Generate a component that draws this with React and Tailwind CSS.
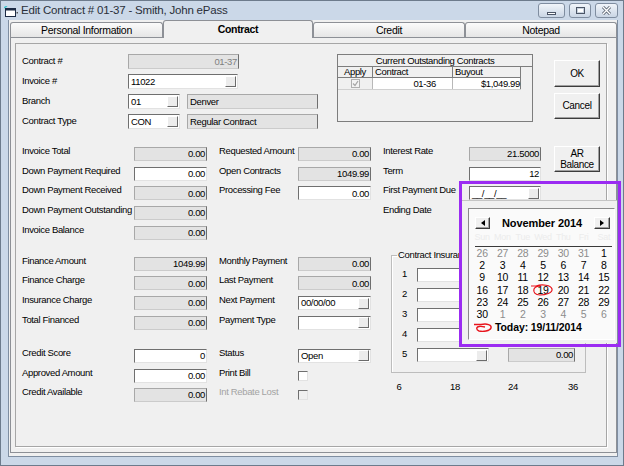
import React from 'react';

function DropBtn() {
  return (
    <span className="ml-auto mr-px h-[11px] w-[11px] shrink-0 border border-t-white border-l-white border-r-[#6b6b6b] border-b-[#6b6b6b] bg-[#ececec]" />
  );
}

function Field({ v = '', gray = false, dim = false, left = false, btn = false, w = 'w-full', h = 'h-[14px]' }) {
  const box = gray
    ? 'border-t-[#a8a8a8] border-l-[#a8a8a8] border-r-[#6f6f6f] border-b-[#cbcbcb] bg-[#e3e3e3]'
    : 'border-t-[#6f6f6f] border-l-[#6f6f6f] border-r-[#e2e2e2] border-b-[#e2e2e2] bg-white';
  return (
    <div className={`flex items-center border ${w} ${h} ${box} ${left ? 'justify-start pl-[2px]' : 'justify-end pr-[1px]'} ${dim ? 'text-[#7f7f7f]' : 'text-black'}`}>
      <span className="whitespace-nowrap">{v}</span>
      {btn && <DropBtn />}
    </div>
  );
}

function Check({ disabled = false }) {
  return (
    <span className={`block h-[10px] w-[10px] border border-t-[#6f6f6f] border-l-[#6f6f6f] border-r-[#e2e2e2] border-b-[#e2e2e2] ${disabled ? 'bg-[#f0f0f0]' : 'bg-white'}`} />
  );
}

function Btn({ children, className = '' }) {
  return (
    <div className={`flex items-center justify-center border border-t-white border-l-white border-r-[#3c3c3c] border-b-[#3c3c3c] bg-[#f0f0f0] shadow-[inset_-1px_-1px_0_#a0a0a0] text-[10px] ${className}`}>
      {children}
    </div>
  );
}

function WinBtn({ children }) {
  return (
    <div className="flex h-[15px] items-center justify-center rounded-[3px] border border-[#7f8da0] bg-gradient-to-b from-[#f1f5fa] to-[#cad6e5]">
      {children}
    </div>
  );
}

function TitleBar() {
  return (
    <div className="flex h-[19px] items-start">
      <svg width="14" height="12" viewBox="0 0 14 12" className="ml-[3px] mt-[5px]">
        <rect x="1.5" y="2.5" width="10" height="8" fill="#fff" stroke="#1d2b44" />
        <rect x="1.5" y="2.5" width="10" height="2" fill="#1d2b44" />
        <path d="M0 2 L3 0" stroke="#3ec6d0" strokeWidth="1.5" />
        <rect x="12.5" y="6" width="1.5" height="1.5" fill="#555" />
      </svg>
      <span className="ml-[3px] mt-[4px] whitespace-nowrap text-[11.5px] tracking-[-0.2px] text-[#2a2f38]">
        Edit Contract # 01-37 - Smith, John ePass
      </span>
      <div className="ml-auto mr-[5px] mt-[2px] flex gap-[4px]">
        <div className="w-[27px]">
          <WinBtn>
            <span className="mt-[5px] block h-[3px] w-[9px] border border-[#4b5566] bg-white" />
          </WinBtn>
        </div>
        <div className="w-[22px]">
          <WinBtn>
            <span className="block h-[7px] w-[9px] border border-[#4b5566] bg-white shadow-[inset_0_0_0_1px_#c8d2de]" />
          </WinBtn>
        </div>
        <div className="w-[23px]">
          <WinBtn>
            <svg width="11" height="9" viewBox="0 0 11 9">
              <path d="M2 1 L9 8 M9 1 L2 8" stroke="#56606e" strokeWidth="3" />
              <path d="M2 1 L9 8 M9 1 L2 8" stroke="#fff" strokeWidth="1.4" />
            </svg>
          </WinBtn>
        </div>
      </div>
    </div>
  );
}

function Tabs() {
  const tab = 'flex h-[15px] items-center justify-center rounded-t-[3px] border border-b-0 border-[#8d9096] bg-gradient-to-b from-[#fbfbfb] to-[#e6e6e6] text-[10.5px] tracking-[-0.3px]';
  return (
    <div className="flex h-[17px] items-end">
      <div className={`${tab} w-[153px]`}>Personal Information</div>
      <div className="relative z-10 -mb-px flex h-[18px] w-[150px] items-center justify-center rounded-t-[3px] border border-b-0 border-[#8d9096] bg-[#f0f0f0] pb-[1px] text-[10.5px] font-bold">
        Contract
      </div>
      <div className={`${tab} w-[152px]`}>Credit</div>
      <div className={`${tab} w-[152px]`}>Notepad</div>
    </div>
  );
}

function TopRow({ label, children }) {
  return (
    <div className="flex h-[15px] items-center">
      <span className="-mt-[2px] w-[106px] whitespace-nowrap">{label}</span>
      {children}
    </div>
  );
}

function Outstanding() {
  return (
    <div className="ml-[19px] h-[68px] w-[196px] border border-[#7d7d7d] bg-[#f0f0f0]">
      <div className="h-[12px] border-b border-[#7d7d7d] text-center leading-[12px]">Current Outstanding Contracts</div>
      <div className="flex h-[11px] w-[183px] border-b border-[#7d7d7d] leading-[10px]">
        <div className="w-[35px] border-r border-[#7d7d7d] text-center">Apply</div>
        <div className="w-[80px] border-r border-[#7d7d7d] pl-[2px]">Contract</div>
        <div className="w-[68px] border-r border-[#7d7d7d] pl-[2px]">Buyout</div>
      </div>
      <div className="flex h-[12px] w-[183px] border-b border-[#d0d0d0] leading-[12px]">
        <div className="flex w-[35px] items-center justify-center border-r border-[#b8b8b8]">
          <span className="flex h-[9px] w-[9px] items-center justify-center border border-[#b0b0b0] bg-[#f4f4f4]">
            <svg width="7" height="7" viewBox="0 0 7 7"><path d="M1 3.5 L3 5.5 L6 1" fill="none" stroke="#a8a8a8" strokeWidth="1.3" /></svg>
          </span>
        </div>
        <div className="w-[80px] border-r border-[#b8b8b8] bg-white pr-[16px] text-right">01-36</div>
        <div className="w-[68px] border-r border-[#7d7d7d] bg-white text-right">$1,049.99</div>
      </div>
    </div>
  );
}

const groupA = [
  ['Invoice Total', { v: '0.00', gray: true }, 'Requested Amount', { v: '0.00', gray: true }],
  ['Down Payment Required', { v: '0.00' }, 'Open Contracts', { v: '1049.99', gray: true }],
  ['Down Payment Received', { v: '0.00', gray: true }, 'Processing Fee', { v: '0.00' }],
  ['Down Payment Outstanding', { v: '0.00', gray: true }],
  ['Invoice Balance', { v: '0.00', gray: true }],
];

const groupB = [
  ['Finance Amount', { v: '1049.99', gray: true }, 'Monthly Payment', { v: '0.00', gray: true }],
  ['Finance Charge', { v: '0.00', gray: true }, 'Last Payment', { v: '0.00', gray: true }],
  ['Insurance Charge', { v: '0.00', gray: true }, 'Next Payment', { v: '00/00/00', left: true, btn: true }],
  ['Total Financed', { v: '0.00', gray: true }, 'Payment Type', { v: '', left: true, btn: true }],
];

const lab = 'self-start whitespace-nowrap leading-[7px]';
const row5 = 'grid h-[14px] grid-cols-[112px_73px_12px_79px_73px] items-center';

function LeftRow({ row }) {
  const [l1, f1, l2, f2] = row;
  return (
    <div className={row5}>
      <span className={lab}>{l1}</span>
      <Field {...f1} />
      <span />
      <span className={lab}>{l2}</span>
      {f2 ? <Field {...f2} /> : <span />}
    </div>
  );
}

function LeftColumn() {
  return (
    <div className="w-[349px] pt-[1px]">
      <div className="flex flex-col gap-[5.7px]">
        {groupA.map((r) => <LeftRow key={r[0]} row={r} />)}
      </div>
      <div className="mt-[17px] flex flex-col gap-[5.7px]">
        {groupB.map((r) => <LeftRow key={r[0]} row={r} />)}
      </div>
      <div className="mt-[19px] flex flex-col gap-[5.7px]">
        <div className={row5}>
          <span className={lab}>Credit Score</span>
          <Field v="0" />
          <span />
          <span className={lab}>Status</span>
          <Field v="Open" left btn />
        </div>
        <div className={row5}>
          <span className={lab}>Approved Amount</span>
          <Field v="0.00" />
          <span />
          <span className={lab}>Print Bill</span>
          <Check />
        </div>
        <div className={row5}>
          <span className={lab}>Credit Available</span>
          <Field v="0.00" gray />
          <span />
          <span className={`${lab} text-[#a3a3a3]`}>Int Rebate Lost</span>
          <Check disabled />
        </div>
      </div>
    </div>
  );
}

function RightColumn() {
  const rows = [
    ['Interest Rate', { v: '21.5000', gray: true }],
    ['Term', { v: '12' }],
    ['First Payment Due', { v: '__/__/__', left: true, btn: true }],
    ['Ending Date', { v: '', left: true, btn: true }],
  ];
  return (
    <div className="ml-[12px] w-[224px]">
      <div className="flex">
        <div className="flex w-[158px] flex-col gap-[5.7px] pt-[1px]">
          {rows.map(([l, f]) => (
            <div key={l} className="grid h-[14px] grid-cols-[86px_72px] items-center">
              <span className={lab}>{l}</span>
              <Field {...f} />
            </div>
          ))}
        </div>
        <Btn className="ml-[13px] h-[26px] w-[46px] flex-col bg-[#1ff01f] leading-[11px]">
          <span>AR</span>
          <span>Balance</span>
        </Btn>
      </div>
      <fieldset className="ml-[8px] mt-[29px] h-[124px] w-[195px] border border-[#bdbdbd] shadow-[inset_1px_1px_0_#fff]">
        <legend className="ml-[5px] px-[1px] leading-[12px]">Contract Insurance</legend>
        <div className="flex flex-col gap-[6px] pt-[7px]">
          {[1, 2, 3, 4, 5].map((n) => (
            <div key={n} className="grid h-[14px] grid-cols-[25px_72px_19px_67px] items-center">
              <span className="-mt-[2px] text-center">{n}</span>
              <Field btn left />
              <span />
              <Field v={n === 5 ? '0.00' : ''} gray />
            </div>
          ))}
        </div>
      </fieldset>
      <div className="mt-[9px] flex leading-[10px]">
        <span className="ml-[6px] w-[20px] text-center">6</span>
        <span className="ml-[36px] w-[20px] text-center">18</span>
        <span className="ml-[38px] w-[20px] text-center">24</span>
        <span className="ml-[40px] w-[20px] text-center">36</span>
      </div>
    </div>
  );
}

const days = [
  [[26, 1], [27, 1], [28, 1], [29, 1], [30, 1], [31, 1], [1, 0]],
  [[2, 0], [3, 0], [4, 0], [5, 0], [6, 0], [7, 0], [8, 0]],
  [[9, 0], [10, 0], [11, 0], [12, 0], [13, 0], [14, 0], [15, 0]],
  [[16, 0], [17, 0], [18, 0], [19, 0], [20, 0], [21, 0], [22, 0]],
  [[23, 0], [24, 0], [25, 0], [26, 0], [27, 0], [28, 0], [29, 0]],
  [[30, 0], [1, 1], [2, 1], [3, 1], [4, 1], [5, 1], [6, 1]],
];

function ArrowBtn({ dir, className = '' }) {
  return (
    <div className={`flex h-[12px] items-center justify-center border border-t-white border-l-white border-r-[#3c3c3c] border-b-[#3c3c3c] bg-[#f0f0f0] shadow-[inset_-1px_-1px_0_#a0a0a0] ${className}`}>
      <svg width="4" height="6" viewBox="0 0 4 6">
        {dir === 'l' ? <path d="M4 0 L0 3 L4 6 Z" fill="#000" /> : <path d="M0 0 L4 3 L0 6 Z" fill="#000" />}
      </svg>
    </div>
  );
}

function Calendar() {
  return (
    <div className="absolute left-[461px] top-[199px] z-20 h-[143px] w-[155px] border-t border-[#c4c4c4] bg-[#f0f0f0] pl-[6px] pt-[7px]">
      <div className="h-[132px] w-[147px] border border-t-[#8a8a8a] border-l-[#8a8a8a] border-r-white border-b-white bg-[#fafafa] tracking-[-0.3px]">
        <div className="mt-[8px] flex h-[12px] items-center">
          <ArrowBtn dir="l" className="ml-[6px] w-[15px]" />
          <span className="flex-1 text-center text-[11px] font-bold tracking-[-0.1px]">November 2014</span>
          <ArrowBtn dir="r" className="mr-[4px] w-[16px]" />
        </div>
        <div className="ml-[3px] grid h-[17px] w-[142px] grid-cols-7 items-center text-center text-[9px] text-[#ececec]">
          {['Sun', 'Mon', 'Tue', 'Wed', 'Thu', 'Fri', 'Sat'].map((d) => <span key={d}>{d}</span>)}
        </div>
        <div className="ml-[6px] mr-[2px] h-px bg-[#3a3a3a]" />
        <div className="ml-[3px] grid w-[142px] grid-cols-7 text-center text-[10.5px]">
          {days.flat().map(([d, g], i) => (
            <span key={i} className={`relative flex h-[12.3px] items-center justify-center ${g ? 'text-[#8c8c8c]' : 'text-black'}`}>
              {d}
              {d === 19 && !g && (
                <svg width="24" height="14" viewBox="0 0 24 14" className="absolute left-[-3px] top-[-1px]">
                  <path d="M1 3 L6 3 C12 1 21 2 22 6 C23 10 15 12 10 12 C5 12 3 9 4 6 C5 4 8 3 11 3" fill="none" stroke="#e8141c" strokeWidth="1.2" />
                </svg>
              )}
            </span>
          ))}
        </div>
        <div className="flex h-[13px] items-center">
          <svg width="19" height="11" viewBox="0 0 19 11" className="ml-[5px]">
            <path d="M0 2.5 L7 2.5 C13 1 18 3 17 6 C16 9 9 10 5 9 C2 8 2 5 5 4.5 C7 4 9 4.5 11 5" fill="none" stroke="#e8141c" strokeWidth="1.4" />
          </svg>
          <span className="ml-[2px] text-[10.5px] font-bold tracking-[-0.1px]">Today: 19/11/2014</span>
        </div>
      </div>
    </div>
  );
}

export default function App() {
  return (
    <div className="relative h-[466px] w-[624px] overflow-hidden border border-[#6d7b8c] bg-[#cbd8e8] font-['Liberation_Sans',Arial,sans-serif] text-[9.5px] leading-none tracking-[-0.35px] text-black">
      <TitleBar />
      <div className="ml-[7px] h-[437px] w-[610px] border border-t-0 border-[#7f8ea1] bg-[#f0f0f0] pl-[1px]">
        <Tabs />
        <div className="h-[416px] w-[607px] border border-[#8d9096] bg-[#f0f0f0] pl-[4px] pt-[5px]">
          <div className="h-[404px] w-[592px] border border-[#a6a6a6] pl-[6px] pt-[10px] shadow-[1px_1px_0_#fff]">
            <div className="flex">
              <div className="flex w-[296px] flex-col gap-[5px]">
                <TopRow label="Contract #">
                  <Field v="01-37" gray dim w="w-[111px]" h="h-[15px]" />
                </TopRow>
                <TopRow label="Invoice #">
                  <Field v="11022" left btn w="w-[110px]" h="h-[15px]" />
                </TopRow>
                <TopRow label="Branch">
                  <Field v="01" left btn w="w-[52px]" h="h-[15px]" />
                  <div className="ml-[7px]"><Field v="Denver" left gray w="w-[131px]" h="h-[15px]" /></div>
                </TopRow>
                <TopRow label="Contract Type">
                  <Field v="CON" left btn w="w-[52px]" h="h-[15px]" />
                  <div className="ml-[7px]"><Field v="Regular Contract" left gray w="w-[131px]" h="h-[15px]" /></div>
                </TopRow>
              </div>
              <Outstanding />
              <div className="ml-[21px] flex flex-col">
                <Btn className="mt-[6px] h-[27px] w-[46px]">OK</Btn>
                <Btn className="mt-[6px] h-[26px] w-[46px]">Cancel</Btn>
              </div>
            </div>
            <div className="mt-[17px] flex">
              <LeftColumn />
              <RightColumn />
            </div>
          </div>
        </div>
      </div>
      <Calendar />
      <div className="pointer-events-none absolute left-[458px] top-[180px] z-30 h-[166px] w-[162px] border-[3px] border-[#9b2cf2]" />
    </div>
  );
}
